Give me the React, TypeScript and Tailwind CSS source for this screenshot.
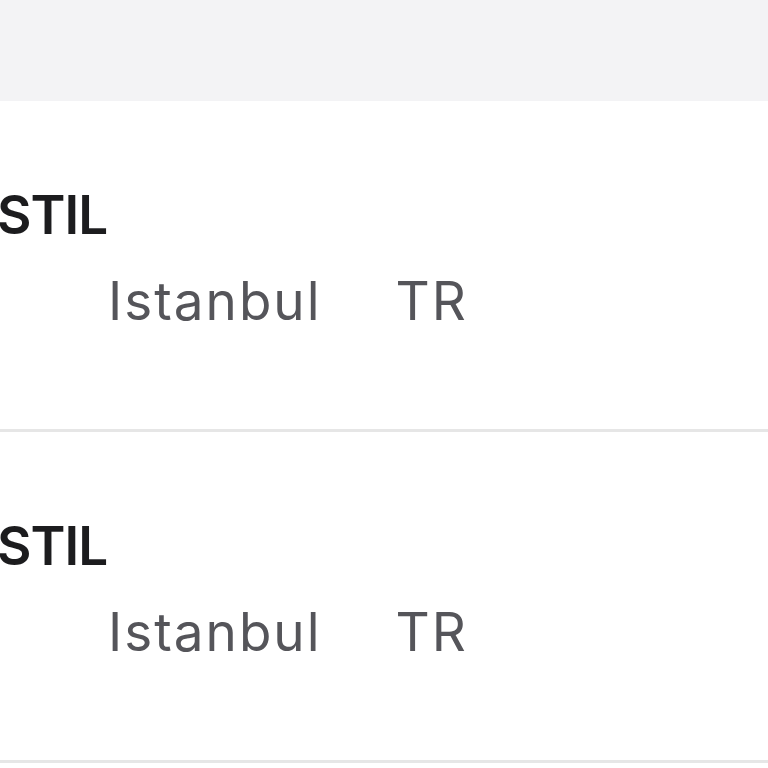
import React from "react";

const rows = [
  { name: "STIL", city: "Istanbul", country: "TR" },
  { name: "STIL", city: "Istanbul", country: "TR" },
];

export default function App() {
  return (
    <div
      className="w-[768px] h-[768px] overflow-hidden bg-white"
      style={{ fontFamily: "Inter, 'Noto Sans', sans-serif" }}
    >
      <div className="h-[101px] bg-[#f3f3f5]" />
      {rows.map((r, i) => (
        <div key={i} className="h-[331px] bg-white border-b-[3px] border-[#e6e6e6] pt-[82px]">
          <div className="-ml-[3px] text-[53px] leading-[64px] font-semibold text-[#1c1c1e] tracking-[-1px]">
            {r.name}
          </div>
          <div className="mt-[22px] flex pl-[108px] gap-[74px] text-[53px] leading-[64px] text-[#55555a] tracking-[2px]">
            <span>{r.city}</span>
            <span>{r.country}</span>
          </div>
        </div>
      ))}
    </div>
  );
}
